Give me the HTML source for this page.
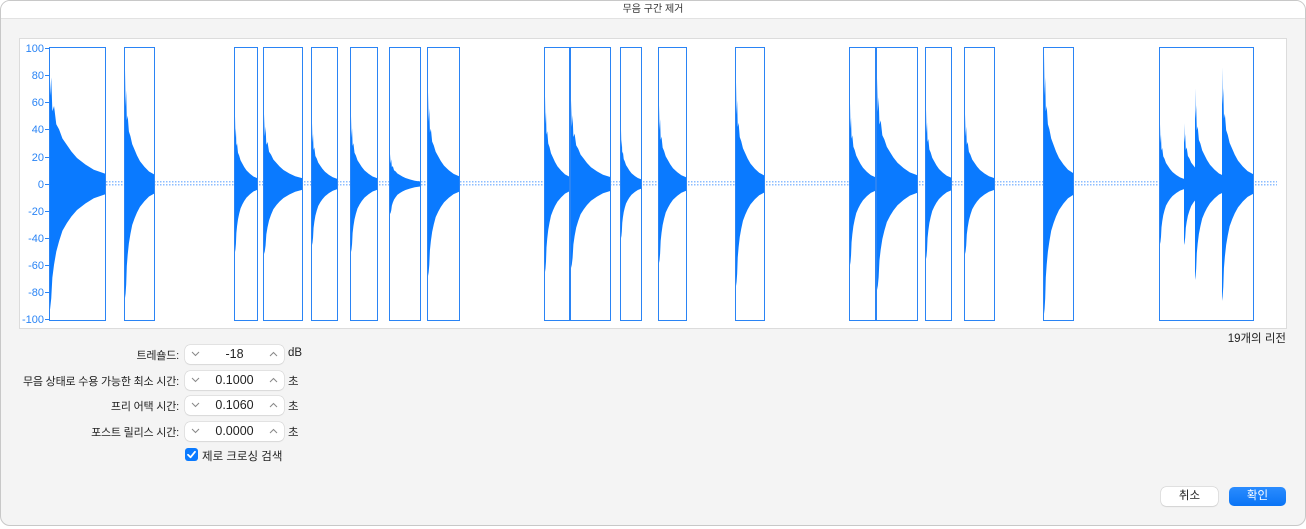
<!DOCTYPE html>
<html><head><meta charset="utf-8"><style>
*{margin:0;padding:0;box-sizing:border-box}
body{width:1306px;height:529px;background:#fff;font-family:"Liberation Sans","Noto Sans CJK KR",sans-serif;position:relative;overflow:hidden}
.win{position:absolute;left:0;top:0;width:1306px;height:526px;border:1px solid #c8c8c8;border-radius:10px;background:#f4f4f4;overflow:hidden}
.tb{position:absolute;left:0;top:0;right:0;height:18px;background:#fff;border-bottom:1px solid #e2e2e2;text-align:center;font-size:10px;line-height:18px;color:#333}
.panel{position:absolute;left:18px;top:37px;width:1268px;height:291px;background:#fff;border:1px solid #dcdcdc}
.lbl{position:absolute;right:1126px;font-size:11px;color:#222;text-align:right;white-space:nowrap;letter-spacing:-0.2px}
.fld{position:absolute;left:184px;width:99px;height:19px;background:#fff;border-radius:5px;box-shadow:0 0 0 .5px #d0d0d0,0 1px 1px rgba(0,0,0,.08);font-size:12.5px;text-align:center;line-height:19px;color:#222}
.fld svg{position:absolute;top:6px}
.unit{position:absolute;left:287px;font-size:11.5px;color:#222}
.btn{position:absolute;top:486px;height:19px;width:57px;border-radius:5px;font-size:11.5px;text-align:center;line-height:19px}
</style></head><body>
<div class="win">
<div class="tb">무음 구간 제거</div>
<div class="panel"></div>
<svg style="position:absolute;left:0;top:0" width="1306" height="345">
<defs>
<path id="w" d="M0,0 L0,-100 L2,-68 L4,-82 L6,-56 L9,-60 L13,-46 L18,-42 L24,-35 L32,-30 L40,-25 L50,-20 L65,-15 L80,-11 L100,-8 L100,8 L80,11 L65,15 L50,20 L40,25 L32,30 L24,36 L18,44 L13,52 L9,62 L6,72 L4,88 L2,96 L0,100 Z" fill="#0a7aff"/>
<pattern id="dots" width="3" height="3" patternUnits="userSpaceOnUse"><rect width="1.5" height="1.5" fill="#5aa0ff"/></pattern>
</defs>
<g font-size="11" fill="#2a84f5" text-anchor="end">
<text x="43" y="51">100</text><text x="43" y="78">80</text><text x="43" y="105">60</text><text x="43" y="132">40</text><text x="43" y="160">20</text><text x="43" y="187">0</text><text x="43" y="214">-20</text><text x="43" y="241">-40</text><text x="43" y="268">-60</text><text x="43" y="295">-80</text><text x="43" y="322">-100</text>
</g>
<g stroke="#2a84f5" stroke-width="1">
<line x1="44" y1="47.5" x2="48" y2="47.5"/><line x1="44" y1="74.5" x2="48" y2="74.5"/><line x1="44" y1="101.5" x2="48" y2="101.5"/><line x1="44" y1="128.5" x2="48" y2="128.5"/><line x1="44" y1="156.5" x2="48" y2="156.5"/><line x1="44" y1="183.5" x2="48" y2="183.5"/><line x1="44" y1="210.5" x2="48" y2="210.5"/><line x1="44" y1="237.5" x2="48" y2="237.5"/><line x1="44" y1="264.5" x2="48" y2="264.5"/><line x1="44" y1="291.5" x2="48" y2="291.5"/><line x1="44" y1="318.5" x2="48" y2="318.5"/>
</g>
<rect x="48" y="180" width="1228" height="6" fill="url(#dots)" opacity="0.7"/>
<g>
<use href="#w" transform="translate(48,183) scale(0.56,1.3)"/>
<use href="#w" transform="translate(124,183) scale(0.3,1.14)"/>
<use href="#w" transform="translate(234,183) scale(0.23,0.68)"/>
<use href="#w" transform="translate(263,183) scale(0.39,0.7)"/>
<use href="#w" transform="translate(311,183) scale(0.26,0.61)"/>
<use href="#w" transform="translate(350,183) scale(0.27,0.68)"/>
<use href="#w" transform="translate(389,183) scale(0.31,0.3)"/>
<use href="#w" transform="translate(427,183) scale(0.32,0.92)"/>
<use href="#w" transform="translate(544,183) scale(0.25,0.88)"/>
<use href="#w" transform="translate(570,183) scale(0.4,0.84)"/>
<use href="#w" transform="translate(620,183) scale(0.21,0.54)"/>
<use href="#w" transform="translate(658,183) scale(0.28,0.79)"/>
<use href="#w" transform="translate(735,183) scale(0.29,1.02)"/>
<use href="#w" transform="translate(849,183) scale(0.26,0.81)"/>
<use href="#w" transform="translate(876,183) scale(0.41,1.06)"/>
<use href="#w" transform="translate(925,183) scale(0.26,0.75)"/>
<use href="#w" transform="translate(964,183) scale(0.3,0.7)"/>
<use href="#w" transform="translate(1043,183) scale(0.3,1.3)"/>
<use href="#w" transform="translate(1159,183) scale(0.25,0.6)"/>
<use href="#w" transform="translate(1183,183) scale(0.3,0.61)"/>
<use href="#w" transform="translate(1194,183) scale(0.3,0.96)"/>
<use href="#w" transform="translate(1221,183) scale(0.32,1.17)"/>
</g>
<g fill="none" stroke="#2a84f5" stroke-width="1">
<rect x="48.5" y="46.5" width="56" height="273"/>
<rect x="123.5" y="46.5" width="30" height="273"/>
<rect x="233.5" y="46.5" width="23" height="273"/>
<rect x="262.5" y="46.5" width="39" height="273"/>
<rect x="310.5" y="46.5" width="26" height="273"/>
<rect x="349.5" y="46.5" width="27" height="273"/>
<rect x="388.5" y="46.5" width="31" height="273"/>
<rect x="426.5" y="46.5" width="32" height="273"/>
<rect x="543.5" y="46.5" width="25" height="273"/>
<rect x="569.5" y="46.5" width="40" height="273"/>
<rect x="619.5" y="46.5" width="21" height="273"/>
<rect x="657.5" y="46.5" width="28" height="273"/>
<rect x="734.5" y="46.5" width="29" height="273"/>
<rect x="848.5" y="46.5" width="26" height="273"/>
<rect x="875.5" y="46.5" width="41" height="273"/>
<rect x="924.5" y="46.5" width="26" height="273"/>
<rect x="963.5" y="46.5" width="30" height="273"/>
<rect x="1042.5" y="46.5" width="30" height="273"/>
<rect x="1158.5" y="46.5" width="94" height="273"/>
</g>
<text x="1285" y="341" font-size="11.5" fill="#222" text-anchor="end">19개의 리전</text>
</svg>
<div class="lbl" style="top:346px">트레숄드:</div>
<div class="lbl" style="top:372px">무음 상태로 수용 가능한 최소 시간:</div>
<div class="lbl" style="top:397px">프리 어택 시간:</div>
<div class="lbl" style="top:423px">포스트 릴리스 시간:</div>
<div class="fld" style="top:344px"><svg style="left:6px" width="9" height="6"><path d="M1 1 L4.5 4.5 L8 1" stroke="#888" fill="none"/></svg>-18<svg style="right:6px" width="9" height="6"><path d="M1 5 L4.5 1.5 L8 5" stroke="#888" fill="none"/></svg></div>
<div class="fld" style="top:370px"><svg style="left:6px" width="9" height="6"><path d="M1 1 L4.5 4.5 L8 1" stroke="#888" fill="none"/></svg>0.1000<svg style="right:6px" width="9" height="6"><path d="M1 5 L4.5 1.5 L8 5" stroke="#888" fill="none"/></svg></div>
<div class="fld" style="top:395px"><svg style="left:6px" width="9" height="6"><path d="M1 1 L4.5 4.5 L8 1" stroke="#888" fill="none"/></svg>0.1060<svg style="right:6px" width="9" height="6"><path d="M1 5 L4.5 1.5 L8 5" stroke="#888" fill="none"/></svg></div>
<div class="fld" style="top:421px"><svg style="left:6px" width="9" height="6"><path d="M1 1 L4.5 4.5 L8 1" stroke="#888" fill="none"/></svg>0.0000<svg style="right:6px" width="9" height="6"><path d="M1 5 L4.5 1.5 L8 5" stroke="#888" fill="none"/></svg></div>
<div class="unit" style="top:346px">dB</div>
<div class="unit" style="top:372px">초</div>
<div class="unit" style="top:397px">초</div>
<div class="unit" style="top:423px">초</div>
<div style="position:absolute;left:184px;top:447px;width:13px;height:13px;border-radius:3px;background:#0a7aff"><svg width="13" height="13"><path d="M3 6.8 L5.5 9.3 L10 3.8" stroke="#fff" stroke-width="1.8" fill="none" stroke-linecap="round" stroke-linejoin="round"/></svg></div>
<div style="position:absolute;left:201px;top:447px;font-size:11.5px;color:#222">제로 크로싱 검색</div>
<div class="btn" style="left:1160px;background:#fff;box-shadow:0 0 0 .5px #ccc,0 1px 1px rgba(0,0,0,.1);color:#222">취소</div>
<div class="btn" style="left:1228px;background:linear-gradient(#2a8cff,#0a74f5);color:#fff">확인</div>
</div>
</body></html>
